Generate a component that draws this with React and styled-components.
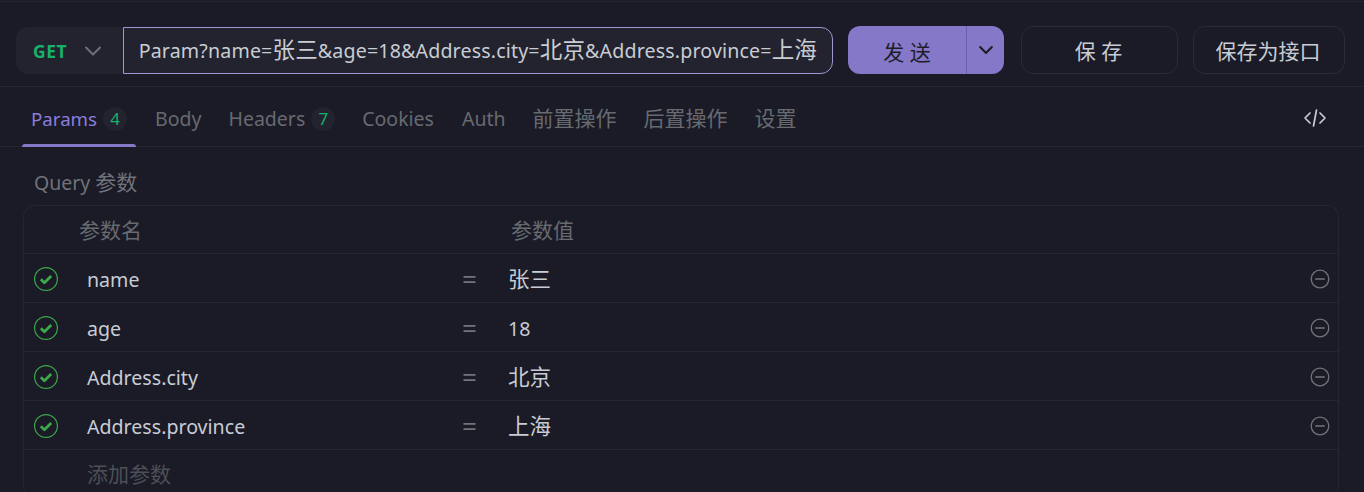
import React from "react";
import styled, { createGlobalStyle } from "styled-components";

const Global = createGlobalStyle`
  html, body { margin: 0; padding: 0; background: #1a1b26; height: 100%; overflow: hidden; }
  * { box-sizing: border-box; }
  body { font-family: "Noto Sans", "Noto Sans CJK SC", sans-serif; }
`;

const Page = styled.div`
  width: 1364px; height: 491px; overflow: hidden; background: #1a1b26; border-top: 1px solid #24252f; margin-top: 1px;
`;
const Toolbar = styled.div`
  height: 85px; padding: 24px 19px 0 16px; display: flex; align-items: flex-start; border-bottom: 1px solid #252631;
`;
const Method = styled.div`
  width: 107px; height: 47px; margin-top: 1px; background: #22232e; border-radius: 12px 0 0 12px; display: flex; align-items: center; padding-left: 17px; gap: 14px;
  color: #17b26a; font-size: 17.5px; font-weight: 700; letter-spacing: 0.5px;
`;
const UrlBox = styled.div`
  width: 710px; height: 47px; margin-top: 1px; background: #22232e; border: 1px solid #a196d3; border-radius: 0 12px 12px 0;
  display: flex; align-items: center; padding: 0 15px 0 14px; overflow: hidden; color: #c8ccd4; font-size: 19.6px; letter-spacing: 0.16px; white-space: pre; justify-content: flex-end;
`;
const Cjk = styled.span`
  font-size: ${p => p.$size ?? 21.5}px; line-height: 1;
`;
const Send = styled.div`
  width: 156px; height: 48px; margin-left: 15px; background: #8578c9; border-radius: 12px; display: flex; color: #1e1e29; font-size: 21px;
`;
const SendMain = styled.div`
  width: 119px; display: flex; align-items: center; justify-content: center; border-right: 1px solid #6a5fa8; padding-top: 1px;
`;
const SendArrow = styled.div`
  flex: 1; display: flex; align-items: center; justify-content: center;
`;
const Ghost = styled.div`
  width: ${p => p.$w}px; height: 48px; margin-left: ${p => p.$ml}px; border: 1px solid #2a2b37; border-radius: 12px; display: flex; align-items: center; justify-content: center;
  color: #c8ccd4; font-size: 21px; padding-right: 2px;
`;
const Tabs = styled.div`
  height: 60px; display: flex; align-items: stretch; padding: 0 22px; border-bottom: 1px solid #252631;
`;
const Tab = styled.div`
  display: flex; align-items: center; gap: 6px; padding: 4px 9px 0; height: 59px; margin-right: ${p => p.$mr ?? 9}px; font-size: ${p => (p.$active ? 18.7 : 19.5)}px;
  color: ${p => (p.$active ? "#8a7ddb" : "#676a70")}; position: relative;
  ${p => p.$active && `&::after { content: ""; position: absolute; left: 0; right: 0; bottom: -1px; height: 3px; background: #8578c9; border-radius: 3px 3px 0 0; }`}
`;
const Badge = styled.span`
  width: 24px; height: 24px; border-radius: 50%; background: #22232e; color: #17b26a; font-size: 17px; display: flex; align-items: center; justify-content: center;
`;
const CodeBtn = styled.div`
  margin-left: auto; margin-right: 15px; display: flex; align-items: center; padding-top: 3px; color: #c8ccd4;
`;
const Section = styled.div`
  padding: 0 26px 0 23px;
`;
const SectionTitle = styled.div`
  height: 58px; padding: 21px 0 0 11px; font-size: 19.5px; line-height: 30px; color: #70737a;
`;
const Table = styled.div`
  border: 1px solid #252631; border-radius: 12px; border-bottom: none; width: 1316px;
`;
const HeadRow = styled.div`
  height: 47px; display: flex; align-items: center; font-size: 21px; color: #676a70; padding-left: 55px; padding-bottom: 1px;
`;
const HeadCell = styled.div`
  width: ${p => p.$w}px;
`;
const Row = styled.div`
  height: 49px; border-top: 1px solid #252631; display: flex; align-items: center; padding: 2px 0 0 10px; font-size: 19.6px; color: #c8ccd4;
`;
const CheckWrap = styled.div`
  width: 24px; height: 24px; flex: none; display: flex;
`;
const Name = styled.div`
  width: 375px; margin-left: 29px; white-space: nowrap;
`;
const Eq = styled.div`
  width: 46px; color: #70737a; font-size: 26px; line-height: 1;
`;
const Value = styled.div`
  flex: 1;
`;
const Remove = styled.div`
  width: 20px; height: 20px; margin-right: 8px; display: flex;
`;
const Placeholder = styled.div`
  margin: 0 0 4px 53px; color: #4c4f57; font-size: 21px;
`;

const Chevron = ({ size = 24, color = "#6d7078", sw = 2 }) => (
  <svg width={size} height={size} viewBox="0 0 24 24" fill="none" stroke={color} strokeWidth={sw} strokeLinecap="round" strokeLinejoin="round"><path d="M5 8.5l7 7 7-7" /></svg>
);
const Check = () => (
  <svg width="24" height="24" viewBox="0 0 24 24" fill="none">
    <circle cx="12" cy="12" r="11.4" stroke="#3da84a" strokeWidth="1.2" />
    <path d="M6.8 12.2l3.6 3.5 6.8-6.6" stroke="#3da84a" strokeWidth="2.8" strokeLinejoin="round" />
  </svg>
);
const Minus = () => (
  <svg width="20" height="20" viewBox="0 0 20 20" fill="none">
    <circle cx="10" cy="10" r="8.8" stroke="#71747b" strokeWidth="1.3" />
    <path d="M5.8 10h8.4" stroke="#71747b" strokeWidth="1.6" strokeLinecap="round" />
  </svg>
);
const Code = () => (
  <svg width="24" height="20" viewBox="0 0 24 20" fill="none" stroke="#c8ccd4" strokeWidth="1.7" strokeLinecap="round" strokeLinejoin="round">
    <path d="M7 5l-5 5 5 5M17 5l5 5-5 5M13.5 2l-3 16" />
  </svg>
);

const rows = [
  ["name", "张三", true],
  ["age", "18", false],
  ["Address.city", "北京", true],
  ["Address.province", "上海", true],
];

export default function App() {
  return (
    <Page>
      <Global />
      <Toolbar>
        <Method>GET<Chevron /></Method>
        <UrlBox>
          <span>Param?name=<Cjk $size={22.5}>张三</Cjk>&amp;age=18&amp;Address.city=<Cjk $size={22.5}>北京</Cjk>&amp;Address.province=<Cjk $size={22.5}>上海</Cjk></span>
        </UrlBox>
        <Send>
          <SendMain>发 送</SendMain>
          <SendArrow><Chevron size={20} color="#1e1e29" sw={2.6} /></SendArrow>
        </Send>
        <Ghost $w={157} $ml={17}>保 存</Ghost>
        <Ghost $w={152} $ml={15}>保存为接口</Ghost>
      </Toolbar>
      <Tabs>
        <Tab $active $mr={10}>Params<Badge>4</Badge></Tab>
        <Tab>Body</Tab>
        <Tab>Headers<Badge>7</Badge></Tab>
        <Tab $mr={10}>Cookies</Tab>
        <Tab>Auth</Tab>
        <Tab><Cjk $size={21}>前置操作</Cjk></Tab>
        <Tab><Cjk $size={21}>后置操作</Cjk></Tab>
        <Tab><Cjk $size={21}>设置</Cjk></Tab>
        <CodeBtn><Code /></CodeBtn>
      </Tabs>
      <Section>
        <SectionTitle>Query <Cjk $size={21}>参数</Cjk></SectionTitle>
        <Table>
          <HeadRow>
            <HeadCell $w={432}>参数名</HeadCell>
            <HeadCell>参数值</HeadCell>
          </HeadRow>
          {rows.map(([n, v, cjk]) => (
            <Row key={n}>
              <CheckWrap><Check /></CheckWrap>
              <Name>{n}</Name>
              <Eq>=</Eq>
              <Value>{cjk ? <Cjk>{v}</Cjk> : v}</Value>
              <Remove><Minus /></Remove>
            </Row>
          ))}
          <Row><Placeholder>添加参数</Placeholder></Row>
        </Table>
      </Section>
    </Page>
  );
}
